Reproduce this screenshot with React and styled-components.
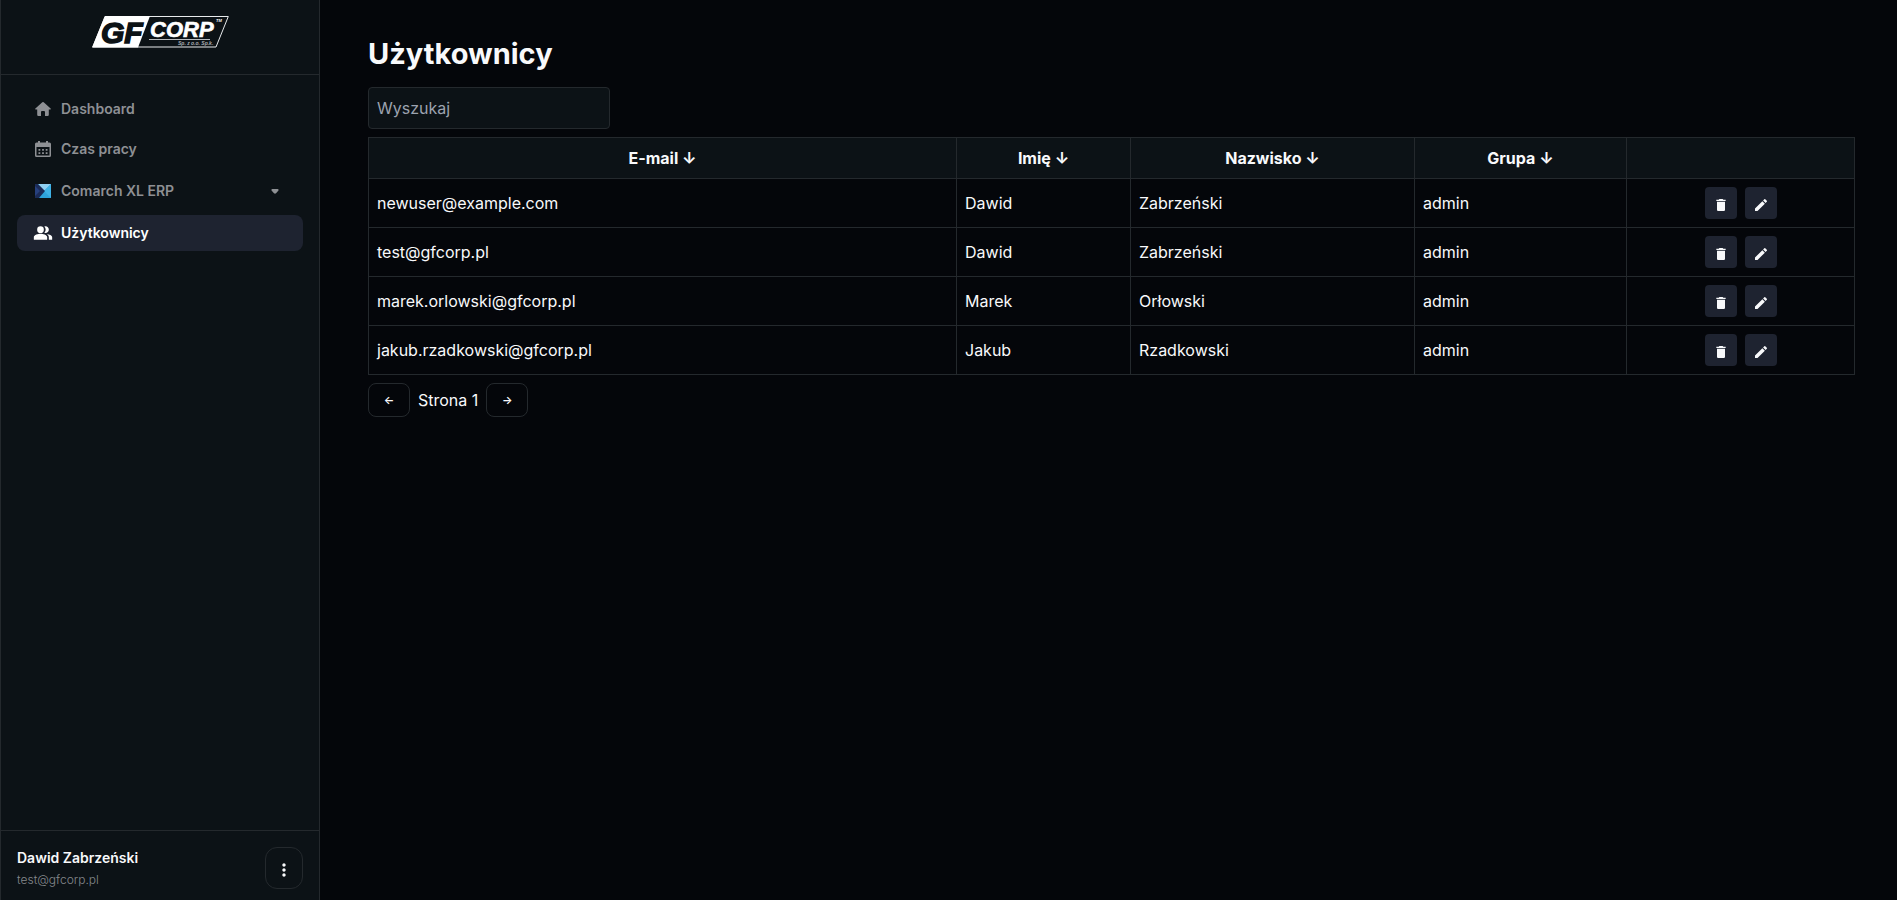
import React from "react";
import styled, { createGlobalStyle } from "styled-components";
import { MdDelete, MdEdit, MdPeopleAlt, MdMoreVert } from "react-icons/md";

const line = "#24292d";
const panel = "#0c1216";
const accent = "#1e2330";

const GlobalStyle = createGlobalStyle`
  *, *::before, *::after { box-sizing: border-box; }
  body {
    margin: 0;
    background: #04060a;
    color: #f8f9fb;
    font: 400 16px/24px Inter, "Noto Sans", sans-serif;
  }
  button, input { font: inherit; color: inherit; }
  button { cursor: pointer; }
  svg { display: block; flex: none; }
`;

const Layout = styled.div`
  display: flex;
  min-height: 100vh;
`;

const Sidebar = styled.aside`
  flex: none;
  width: 320px;
  display: flex;
  flex-direction: column;
  background: ${panel};
  border: solid ${line};
  border-width: 0 1px;
`;

const Brand = styled.a`
  display: flex;
  justify-content: center;
  padding: 14px 0 25px;
  border-bottom: 1px solid ${line};
`;

const Nav = styled.nav`
  flex: 1;
  display: flex;
  flex-direction: column;
  gap: 4px;
  padding: 16px;
`;

const NavLink = styled.a`
  display: flex;
  align-items: center;
  gap: 8px;
  width: 100%;
  padding: ${(p) => (p.$tall ? "10px" : "8px")} 16px;
  border: 0;
  border-radius: 8px;
  background: ${(p) => (p.$active ? accent : "transparent")};
  color: ${(p) => (p.$active ? "#ffffff" : "#8e9094")};
  font-size: 14px;
  font-weight: 600;
  line-height: 20px;
  text-align: left;
  text-decoration: none;
`;

const NavIcon = styled.span`
  display: flex;
  justify-content: center;
  width: 20px;
`;

const NavLabel = styled.span`
  flex: 1;
`;

const Account = styled.footer`
  display: flex;
  align-items: flex-start;
  justify-content: space-between;
  padding: 16px 16px 9px;
  border-top: 1px solid ${line};
`;

const AccountName = styled.div`
  font-size: 14px;
  font-weight: 600;
  line-height: 22px;
`;

const AccountMail = styled.div`
  color: #85888c;
  font-size: 12px;
  font-weight: 300;
  line-height: 22px;
`;

const MenuButton = styled.button`
  display: flex;
  align-items: center;
  justify-content: center;
  width: 38px;
  height: 42px;
  padding: 4px 0 0;
  border: 1px solid ${line};
  border-radius: 12px;
  background: transparent;
`;

const Main = styled.main`
  flex: 1;
  min-width: 0;
  padding: 36px 42px 48px 48px;
`;

const Title = styled.h1`
  margin: 0 0 15px;
  font-size: 29px;
  font-weight: 700;
  line-height: 36px;
`;

const Search = styled.input`
  display: block;
  width: 242px;
  margin-bottom: 8px;
  padding: 8px;
  height: 42px;
  border: 1px solid ${line};
  border-radius: 4px;
  background: ${panel};
  &::placeholder { color: #9ca3af; opacity: 1; }
`;

const Table = styled.table`
  width: 100%;
  table-layout: fixed;
  border-collapse: collapse;
`;

const Column = styled.col`
  width: ${(p) => p.$width}px;
`;

const HeadCell = styled.th`
  padding: 8px;
  border: 1px solid ${line};
  background: ${panel};
  font-weight: 700;
  text-align: center;
`;

const Cell = styled.td`
  padding: 8px;
  border: 1px solid ${line};
`;

const Actions = styled.div`
  display: flex;
  justify-content: center;
  gap: 8px;
`;

const ActionButton = styled.button`
  display: flex;
  align-items: center;
  justify-content: center;
  width: 32px;
  height: 32px;
  padding: 4px 0 0;
  border: 0;
  border-radius: 4px;
  background: ${accent};
`;

const Pagination = styled.div`
  display: flex;
  align-items: center;
  gap: 8px;
  margin-top: 8px;
`;

const PageButton = styled.button`
  width: 42px;
  padding: 8px 0;
  border: 1px solid ${line};
  border-radius: 8px;
  background: transparent;
  font-size: 11px;
  font-weight: 600;
  line-height: 16px;
  text-align: center;
`;

const Logo = () => (
  <svg width="137" height="35" viewBox="0 0 137 35" role="img" aria-label="GF Corp">
    <path d="M13 2.5H136.300L124 33H.8Z" fill="none" stroke="#e8eaec" strokeWidth="1" />
    <path d="M13 2H58L46 33.500H0Z" fill="#ffffff" />
    <g fontFamily="Liberation Sans, sans-serif" fontWeight="700" fontStyle="italic">
      <text x="9" y="28.500" fontSize="30" fill={panel} stroke={panel} strokeWidth="1.500">GF</text>
      <text x="58" y="22.500" fontSize="22" fill="#ffffff" stroke="#ffffff" strokeWidth=".6">CORP</text>
      <text x="86" y="31" fontSize="5" fill="#a9adb1">Sp. z o.o. Sp.k.</text>
      <text x="124" y="8" fontSize="4" fill="#ffffff">TM</text>
    </g>
    <path d="M57 25.500H118" stroke="#b9bcc0" strokeWidth="1" />
  </svg>
);

const HomeIcon = () => (
  <svg width="16" height="16" viewBox="0 0 16 16" fill="currentColor">
    <path d="M7.300 1.200Q8 .6 8.700 1.200L15.600 7.400Q16.300 8.300 15.300 8.500H13.800V13.800Q13.800 15 12.600 15H10V11Q10 10 9 10H7Q6 10 6 11V15H3.400Q2.200 15 2.200 13.800V8.500H.7Q-.3 8.300.4 7.400Z" />
  </svg>
);

const CaretIcon = () => (
  <svg width="24" height="20" viewBox="0 0 24 20" fill="currentColor">
    <path d="M9.300 8H14.700Q16.200 8.300 15.300 9.700L13 12.300Q12 13.200 11 12.300L8.700 9.700Q7.800 8.300 9.300 8Z" />
  </svg>
);

const CalendarIcon = () => (
  <svg width="16" height="18" viewBox="0 0 16 18" fill="currentColor">
    <path
      fillRule="evenodd"
      d="M3 1h2v1.500h6V1h2v1.500h1.500Q16 2.500 16 4v11.500Q16 17 14.500 17h-13Q0 17 0 15.500V4Q0 2.500 1.500 2.500H3ZM1.500 7v8.500h13V7Z"
    />
    <path d="M3.500 9h1.800v1.800H3.500zM7.100 9h1.800v1.800H7.100zM10.700 9h1.800v1.800h-1.800zM3.500 12.200h1.800V14H3.500zM7.100 12.200h1.800V14H7.100zM10.700 12.200h1.800V14h-1.800z" />
  </svg>
);

const ComarchIcon = () => (
  <svg width="16" height="14" viewBox="0 0 16 14">
    <path d="M0 0h16v14H0z" fill="#2ea3dc" />
    <path d="M3 0h13L9 7Z" fill="#8fd0f2" />
    <path d="M16 0v14L9 7Z" fill="#3fb2e6" />
    <path d="M0 0h3l7 7-6 7H0z" fill="#1b2b57" />
    <path d="M0 2l5 5-5 5z" fill="#27407d" />
  </svg>
);

const columns = ["E-mail", "Imię", "Nazwisko", "Grupa"];

/* Proportional shares; the table stretches them to the available width. */
const columnWidths = [294, 87, 142, 106, 114];

const users = [
  ["newuser@example.com", "Dawid", "Zabrzeński", "admin"],
  ["test@gfcorp.pl", "Dawid", "Zabrzeński", "admin"],
  ["marek.orlowski@gfcorp.pl", "Marek", "Orłowski", "admin"],
  ["jakub.rzadkowski@gfcorp.pl", "Jakub", "Rzadkowski", "admin"],
];

export default function App() {
  return (
    <Layout>
      <GlobalStyle />
      <Sidebar>
        <Brand href="#">
          <Logo />
        </Brand>
        <Nav>
          <NavLink href="#dashboard">
            <NavIcon><HomeIcon /></NavIcon>
            <NavLabel>Dashboard</NavLabel>
          </NavLink>
          <NavLink href="#czas-pracy">
            <NavIcon><CalendarIcon /></NavIcon>
            <NavLabel>Czas pracy</NavLabel>
          </NavLink>
          <NavLink as="button" type="button" aria-expanded="false" $tall>
            <NavIcon><ComarchIcon /></NavIcon>
            <NavLabel>Comarch XL ERP</NavLabel>
            <CaretIcon />
          </NavLink>
          <NavLink href="#uzytkownicy" aria-current="page" $active>
            <NavIcon><MdPeopleAlt size={20} /></NavIcon>
            <NavLabel>Użytkownicy</NavLabel>
          </NavLink>
        </Nav>
        <Account>
          <div>
            <AccountName>Dawid Zabrzeński</AccountName>
            <AccountMail>test@gfcorp.pl</AccountMail>
          </div>
          <MenuButton type="button" aria-label="Menu konta">
            <MdMoreVert size={20} />
          </MenuButton>
        </Account>
      </Sidebar>
      <Main>
        <Title>Użytkownicy</Title>
        <Search type="text" placeholder="Wyszukaj" aria-label="Wyszukaj" />
        <Table>
          <colgroup>
            {columnWidths.map((width) => (
              <Column key={width} $width={width} />
            ))}
          </colgroup>
          <thead>
            <tr>
              {columns.map((name) => (
                <HeadCell key={name} scope="col">{name} ↓</HeadCell>
              ))}
              <HeadCell as="td" />
            </tr>
          </thead>
          <tbody>
            {users.map((user) => (
              <tr key={user[0]}>
                {user.map((value, i) => (
                  <Cell key={columns[i]}>{value}</Cell>
                ))}
                <Cell>
                  <Actions>
                    <ActionButton type="button" aria-label="Usuń">
                      <MdDelete size={16} />
                    </ActionButton>
                    <ActionButton type="button" aria-label="Edytuj">
                      <MdEdit size={16} />
                    </ActionButton>
                  </Actions>
                </Cell>
              </tr>
            ))}
          </tbody>
        </Table>
        <Pagination>
          <PageButton type="button" aria-label="Poprzednia strona">←</PageButton>
          <span>Strona 1</span>
          <PageButton type="button" aria-label="Następna strona">→</PageButton>
        </Pagination>
      </Main>
    </Layout>
  );
}
